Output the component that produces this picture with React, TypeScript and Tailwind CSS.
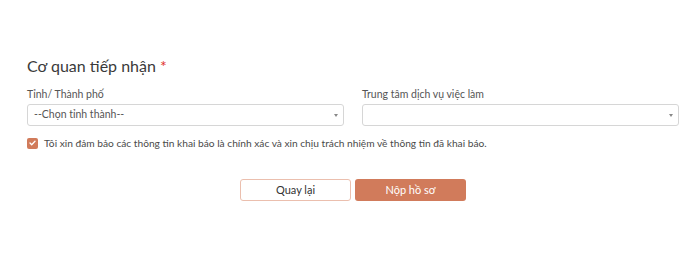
import React from "react";

function SelectBox({ value }: { value?: string }) {
  return (
    <div className="flex h-[22px] items-center justify-between rounded-[3px] border border-[#d6d6d6] bg-white pl-[6px] pr-[5px] text-[10.5px] text-[#555]">
      <span>{value ?? ""}</span>
      <span className="h-0 w-0 border-x-[2.5px] border-t-[3px] border-x-transparent border-t-[#888]" />
    </div>
  );
}

export default function App() {
  return (
    <div
      className="h-[277px] w-full bg-white pl-[27px] pr-[21px] pt-[54px] text-[#333]"
      style={{ fontFamily: "Lato, 'Noto Sans', sans-serif" }}
    >
      <h2 className="text-[16px] leading-[24px] text-[#3a3a3a]">
        Cơ quan tiếp nhận <span className="text-[#e0322b]">*</span>
      </h2>

      <div className="mt-[8px] grid grid-cols-2 gap-[18px]">
        <div>
          <div className="text-[10.5px] leading-[16px] text-[#555]">Tỉnh/ Thành phố</div>
          <div className="mt-[2px]">
            <SelectBox value="--Chọn tỉnh thành--" />
          </div>
        </div>
        <div>
          <div className="text-[10.5px] leading-[16px] text-[#555]">Trung tâm dịch vụ việc làm</div>
          <div className="mt-[2px]">
            <SelectBox />
          </div>
        </div>
      </div>

      <label className="mt-[10px] flex items-center gap-[6px] text-[10.2px] leading-[14px] text-[#4a4a4a]">
        <span className="flex h-[11px] w-[11px] items-center justify-center rounded-[2px] bg-[#d17b5b]">
          <svg width="7" height="6" viewBox="0 0 7 6" fill="none">
            <path d="M1 3l1.7 1.7L6 1.3" stroke="white" strokeWidth="1.3" strokeLinecap="round" strokeLinejoin="round" />
          </svg>
        </span>
        Tôi xin đảm bảo các thông tin khai báo là chính xác và xin chịu trách nhiệm về thông tin đã khai báo.
      </label>

      <div className="mt-[29px] flex justify-center gap-[4px]">
        <button className="h-[22px] w-[111px] rounded-[3px] border border-[#ebbfae] bg-white text-[11px] text-[#333]">
          Quay lại
        </button>
        <button className="h-[22px] w-[111px] rounded-[3px] bg-[#d17b5b] text-[11px] text-white">
          Nộp hồ sơ
        </button>
      </div>
    </div>
  );
}
